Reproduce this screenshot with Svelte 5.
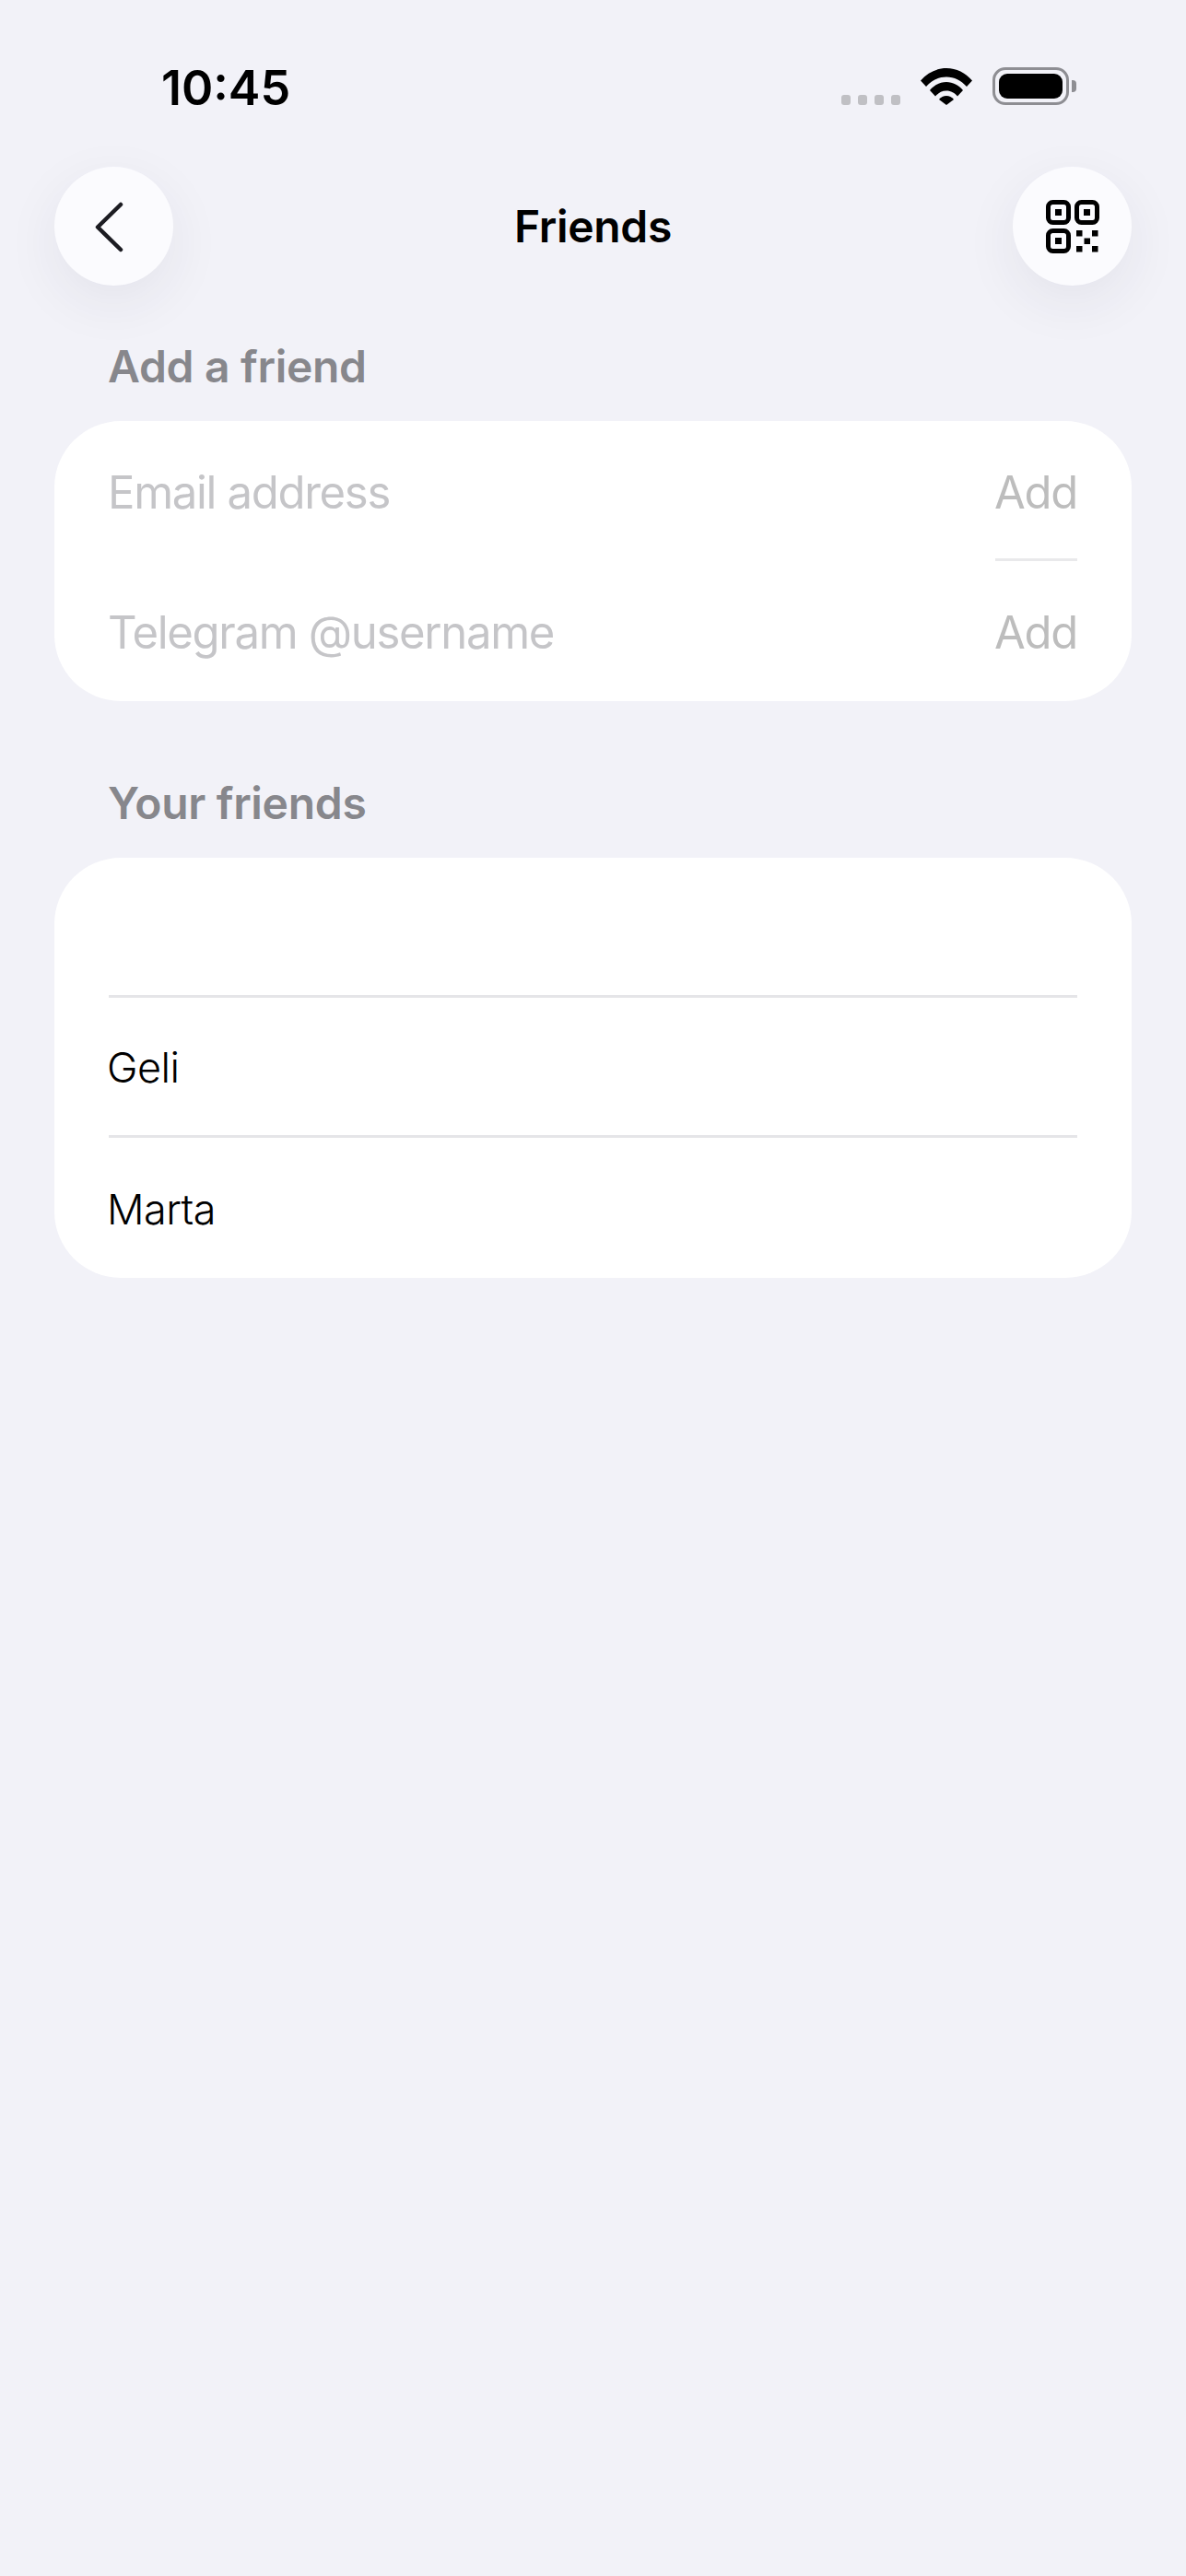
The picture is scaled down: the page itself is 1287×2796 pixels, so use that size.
<script>
    const friends = ["", "Geli", "Marta"];
    const inputs = ["Email address", "Telegram @username"];
    const dots = [0, 1, 2, 3];
    const qrDots = [
        [33, 33],
        [50, 33],
        [41.5, 41.5],
        [33, 50],
        [50, 50],
    ];
</script>

<div class="page">
    <div class="status">
        <span class="time">10:45</span>
        <div class="status-icons">
            <div class="signal">
                {#each dots as d (d)}
                    <span class="dot"></span>
                {/each}
            </div>
            <svg class="wifi" width="56" height="41" viewBox="0 0 56 41">
                <path d="M0 14.5C7.5 6 17 1 28 1s20.500 5 28 13.500l-6 6.500C44 14.500 36.500 10.500 28 10.500S12 14.500 6 21z" />
                <path d="M10 25C14.500 19.500 21 16 28 16s13.500 3.500 18 9l-6 6.500C37 28 33 25.500 28 25.500S19 28 16 31.500z" />
                <path d="M20 35C22 32.500 25 31 28 31s6 1.500 8 4l-8 6z" />
            </svg>
            <div class="battery">
                <div class="battery-body"><span class="battery-fill"></span></div>
                <span class="battery-cap"></span>
            </div>
        </div>
    </div>

    <header class="nav">
        <button class="round" aria-label="Back">
            <svg width="129" height="129" viewBox="0 0 129 129" fill="none">
                <path d="M72 41L47 65.500L72 90" stroke="#1c1c22" stroke-width="4.500" stroke-linecap="round" stroke-linejoin="round" />
            </svg>
        </button>
        <h1>Friends</h1>
        <button class="round" aria-label="QR code">
            <svg width="58" height="58" viewBox="0 0 58 58">
                <g fill="none" stroke="#000" stroke-width="5">
                    <rect x="2.500" y="2.500" width="22" height="22" rx="5" />
                    <rect x="33.500" y="2.500" width="22" height="22" rx="5" />
                    <rect x="2.500" y="33.500" width="22" height="22" rx="5" />
                </g>
                <rect x="10" y="10" width="7" height="7" />
                <rect x="41" y="10" width="7" height="7" />
                <rect x="10" y="41" width="7" height="7" />
                {#each qrDots as [x, y]}
                    <rect {x} {y} width="6.500" height="6.500" />
                {/each}
            </svg>
        </button>
    </header>

    <section class="first">
        <h2>Add a friend</h2>
        <div class="card">
            {#each inputs as label, i}
                <div class="row">
                    <span class="placeholder">{label}</span>
                    <span class="add" class:ruled={i === 0}>Add</span>
                </div>
            {/each}
        </div>
    </section>

    <section>
        <h2>Your friends</h2>
        <div class="card">
            {#each friends as name}
                <div class="friend">{name}</div>
            {/each}
        </div>
    </section>
</div>

<style>
    :global(body) {
        margin: 0;
        background: #f2f2f8;
    }

    .page {
        height: 2796px;
        box-sizing: border-box;
        padding: 0 59px;
        background: #f2f2f8;
        font-family: Inter, "Liberation Sans", sans-serif;
        overflow: hidden;
    }

    .status {
        height: 181px;
        display: flex;
        justify-content: space-between;
        padding: 65px 60px 0 116px;
        box-sizing: border-box;
    }

    .time {
        font-size: 52px;
        font-weight: 600;
        line-height: 62px;
        color: #000;
    }

    .status-icons {
        display: flex;
        align-items: flex-start;
        padding-top: 8px;
    }

    .signal {
        display: flex;
        gap: 7.500px;
        margin: 30px 22px 0 0;
    }

    .dot {
        width: 10.500px;
        height: 11px;
        border-radius: 3px;
        background: #c0c0c4;
    }

    .wifi {
        fill: #000;
        margin-right: 22px;
    }

    .battery {
        display: flex;
        align-items: center;
        gap: 3px;
    }

    .battery-body {
        width: 83px;
        height: 41px;
        box-sizing: border-box;
        border: 3px solid #8e8e93;
        border-radius: 14px;
        padding: 4px;
        display: flex;
    }

    .battery-fill {
        flex: 1;
        background: #000;
        border-radius: 9px;
    }

    .battery-cap {
        width: 5px;
        height: 13px;
        background: #8e8e93;
        border-radius: 0 4px 4px 0;
    }

    .nav {
        display: flex;
        align-items: center;
        justify-content: space-between;
        height: 129px;
    }

    .round {
        width: 129px;
        height: 129px;
        padding: 0;
        border: none;
        border-radius: 50%;
        background: #fbfbfe;
        box-shadow: 0 18px 60px rgba(40, 40, 70, 0.07);
        display: flex;
        align-items: center;
        justify-content: center;
    }

    h1 {
        margin: 0;
        font-size: 48px;
        font-weight: 600;
        letter-spacing: -0.300px;
        color: #000;
    }

    section {
        margin-top: 81px;
    }

    section.first {
        margin-top: 58px;
    }

    h2 {
        margin: 0 0 29px;
        padding-left: 58px;
        font-size: 48px;
        line-height: 60px;
        font-weight: 600;
        letter-spacing: -0.300px;
        color: #87878c;
    }

    .card {
        background: #fff;
        border-radius: 72px;
        padding: 0 59px;
    }

    .row {
        display: flex;
        justify-content: space-between;
        height: 152px;
        font-size: 49px;
        letter-spacing: -1.300px;
    }

    .placeholder {
        color: #c5c5c8;
        align-self: center;
        padding-top: 2px;
        margin-left: -1px;
    }

    .add {
        width: 89px;
        padding-top: 2px;
        display: flex;
        align-items: center;
        justify-content: flex-end;
        color: #bdbdbd;
    }

    .ruled {
        box-sizing: border-box;
        padding-top: 5px;
        border-bottom: 3px solid #e9e9eb;
    }

    .friend {
        height: 152px;
        box-sizing: border-box;
        display: flex;
        align-items: center;
        padding-top: 2px;
        text-indent: -2px;
        font-size: 45px;
        font-weight: 300;
        letter-spacing: -0.500px;
        color: #000;
        border-bottom: 3px solid #e5e5e8;
    }

    .friend:last-child {
        border-bottom: none;
    }
</style>
